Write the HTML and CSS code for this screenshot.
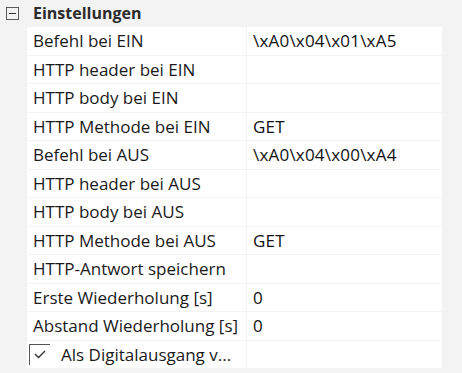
FILE: index.html
```html
<!DOCTYPE html>
<html lang="de">
<head>
  <meta charset="UTF-8">
  <meta name="viewport" content="width=device-width, initial-scale=1.0">
  <title>Einstellungen</title>
  <link rel="stylesheet" href="styles.css">
</head>
<body>
  <!-- Category header -->
  <div class="category">
    <span class="expander"></span>
    <span class="category-title">Einstellungen</span>
  </div>

  <!-- Property grid -->
  <div class="props">
    <div class="name">Befehl bei EIN</div>
    <div class="value">\xA0\x04\x01\xA5</div>
    <div class="name">HTTP header bei EIN</div>
    <div class="value"></div>
    <div class="name">HTTP body bei EIN</div>
    <div class="value"></div>
    <div class="name">HTTP Methode bei EIN</div>
    <div class="value">GET</div>
    <div class="name">Befehl bei AUS</div>
    <div class="value">\xA0\x04\x00\xA4</div>
    <div class="name">HTTP header bei AUS</div>
    <div class="value"></div>
    <div class="name">HTTP body bei AUS</div>
    <div class="value"></div>
    <div class="name">HTTP Methode bei AUS</div>
    <div class="value">GET</div>
    <div class="name">HTTP-Antwort speichern</div>
    <div class="value"></div>
    <div class="name">Erste Wiederholung [s]</div>
    <div class="value">0</div>
    <div class="name">Abstand Wiederholung [s]</div>
    <div class="value">0</div>
    <div class="name check-row">
      <span class="checkbox">
        <svg width="12" height="9" viewBox="0 0 12 9"><path d="M1 4 L4.5 7.5 L11 1" fill="none" stroke="#333" stroke-width="1.4"/></svg>
      </span>
      <span>Als Digitalausgang v...</span>
    </div>
    <div class="value"></div>
  </div>
</body>
</html>
```

FILE: styles.css
```css
body {
  margin: 0;
  background: #f3f3f3;
  font-family: "Open Sans", "Noto Sans", sans-serif;
  font-size: 17px;
  color: #1a1a1a;
}
.category {
  display: flex;
  align-items: center;
  height: 26px;
}
.expander {
  box-sizing: border-box;
  width: 13px;
  height: 13px;
  margin-left: 6px;
  border: 1px solid #5a5a5a;
  position: relative;
}
.expander::after {
  content: "";
  position: absolute;
  left: 2px;
  right: 2px;
  top: 5px;
  height: 1px;
  background: #333;
}
.category-title {
  margin-left: 14px;
  font-size: 16px;
  font-weight: bold;
  color: #2b2b2b;
}
.props {
  display: grid;
  grid-template-columns: 219px 195px;
  grid-auto-rows: 27.5px;
  gap: 1px;
  margin-left: 27px;
  margin-top: 1px;
}
.name, .value {
  background: #fff;
  padding-left: 6px;
  display: flex;
  align-items: center;
  white-space: nowrap;
  overflow: hidden;
}
.value {
  color: #111;
  letter-spacing: 0.2px;
}
.check-row {
  padding-left: 2px;
}
.checkbox {
  box-sizing: border-box;
  width: 21px;
  height: 21px;
  border-top: 1px solid #555;
  border-left: 1px solid #555;
  display: flex;
  align-items: center;
  justify-content: center;
  margin-right: 11px;
}
```
